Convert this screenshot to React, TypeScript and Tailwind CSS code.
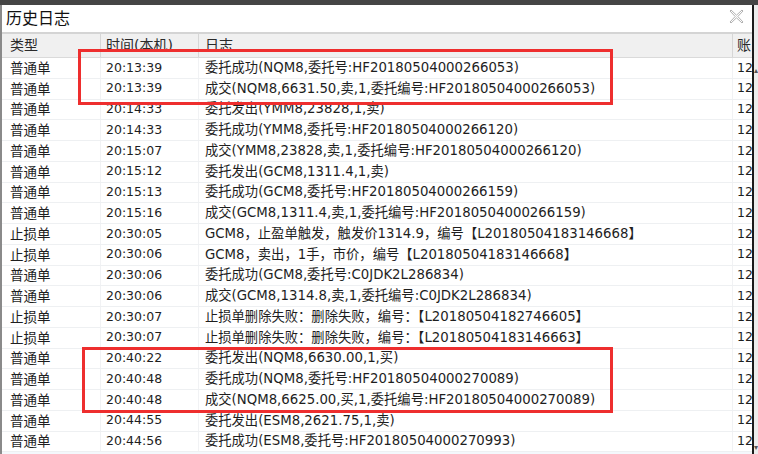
import React from "react";

const rows: [string, string, string][] = [
  ["普通单", "20:13:39", "委托成功(NQM8,委托号:HF20180504000266053)"],
  ["普通单", "20:13:39", "成交(NQM8,6631.50,卖,1,委托编号:HF20180504000266053)"],
  ["普通单", "20:14:33", "委托发出(YMM8,23828,1,卖)"],
  ["普通单", "20:14:33", "委托成功(YMM8,委托号:HF20180504000266120)"],
  ["普通单", "20:15:07", "成交(YMM8,23828,卖,1,委托编号:HF20180504000266120)"],
  ["普通单", "20:15:12", "委托发出(GCM8,1311.4,1,卖)"],
  ["普通单", "20:15:13", "委托成功(GCM8,委托号:HF20180504000266159)"],
  ["普通单", "20:15:16", "成交(GCM8,1311.4,卖,1,委托编号:HF20180504000266159)"],
  ["止损单", "20:30:05", "GCM8，止盈单触发，触发价1314.9，编号【L20180504183146668】"],
  ["止损单", "20:30:06", "GCM8，卖出，1手，市价，编号【L20180504183146668】"],
  ["普通单", "20:30:06", "委托成功(GCM8,委托号:C0JDK2L286834)"],
  ["普通单", "20:30:06", "成交(GCM8,1314.8,卖,1,委托编号:C0JDK2L286834)"],
  ["止损单", "20:30:07", "止损单删除失败：删除失败，编号：【L20180504182746605】"],
  ["止损单", "20:30:07", "止损单删除失败：删除失败，编号：【L20180504183146663】"],
  ["普通单", "20:40:22", "委托发出(NQM8,6630.00,1,买)"],
  ["普通单", "20:40:48", "委托成功(NQM8,委托号:HF20180504000270089)"],
  ["普通单", "20:40:48", "成交(NQM8,6625.00,买,1,委托编号:HF20180504000270089)"],
  ["普通单", "20:44:55", "委托发出(ESM8,2621.75,1,卖)"],
  ["普通单", "20:44:56", "委托成功(ESM8,委托号:HF20180504000270993)"],
];

const font = "[font-family:'DejaVu_Sans','Noto_Sans_CJK_SC',sans-serif]";

export default function App() {
  return (
    <div className={`relative w-[758px] h-[454px] overflow-hidden flex flex-col bg-[#3c3c3c] ${font} text-[12.5px] text-[#1e1e1e]`}>
      <div className="h-[5px] shrink-0 bg-[#454545]" />
      <div className="flex flex-1 min-h-0">
        <div className="w-[2px] bg-[#8a8a8a]" />
        <div className="w-[750px] flex flex-col bg-white">
          {/* title bar */}
          <div className="h-[29px] shrink-0 flex items-center justify-between pl-[4px] pr-[8px] border-b-2 border-[#d4d4d4]">
            <span className="text-[16px] text-[#111]">历史日志</span>
            <svg width="15" height="15" viewBox="0 0 15 15" className="mt-[-4px]">
              <path
                d="M1 2 L2 1 L7.5 6.2 L13 1 L14 2 L8.8 7.5 L14 13 L13 14 L7.5 8.8 L2 14 L1 13 L6.2 7.5 Z"
                fill="#fff"
                stroke="#a8a8a8"
                strokeWidth="0.9"
              />
            </svg>
          </div>
          {/* header */}
          <div className="h-[24px] shrink-0 flex bg-[#f0f0f0] border-b border-[#dadada] text-[#2a2a2a] text-[14px]">
            <div className="w-[99px] pl-[8px] flex items-center border-r border-[#d6d6d6]">类型</div>
            <div className="w-[98px] pl-[5px] flex items-center border-r border-[#d6d6d6]">时间(本机)</div>
            <div className="w-[534px] pl-[6px] flex items-center border-r border-[#d6d6d6]">日志</div>
            <div className="flex-1 pl-[4px] flex items-center overflow-hidden whitespace-nowrap">账</div>
          </div>
          {/* rows */}
          <div className="flex flex-col">
            {rows.map((r, i) => (
              <div key={i} className="h-[20.75px] shrink-0 flex border-b border-[#eef0f2] whitespace-nowrap">
                <div className="w-[99px] pl-[8px] flex items-center border-r border-[#f1f2f4] text-[13.5px]">{r[0]}</div>
                <div className="w-[98px] pl-[5px] flex items-center border-r border-[#f1f2f4]">{r[1]}</div>
                <div className="w-[534px] pl-[6px] flex items-center border-r border-[#f1f2f4] text-[13.3px]">{r[2]}</div>
                <div className="flex-1 pl-[4px] flex items-center overflow-hidden">12</div>
              </div>
            ))}
          </div>
          <div className="flex-1 bg-[#f4f8fc]" />
        </div>
        <div className="w-[2px] bg-[#1a1a1a]" />
        <div className="flex-1 bg-[#ececec] flex flex-col justify-between items-center text-[8px] text-[#555] leading-none">
          <span className="mt-[62px]">▴</span>
          <span className="mb-[2px]">▾</span>
        </div>
      </div>
      {/* red annotation boxes */}
      <div className="absolute left-[78px] top-[49px] w-[535px] h-[56px] border-[3px] border-[#ee2e2e]" />
      <div className="absolute left-[82px] top-[347px] w-[531px] h-[66px] border-[3px] border-[#ee2e2e]" />
    </div>
  );
}
